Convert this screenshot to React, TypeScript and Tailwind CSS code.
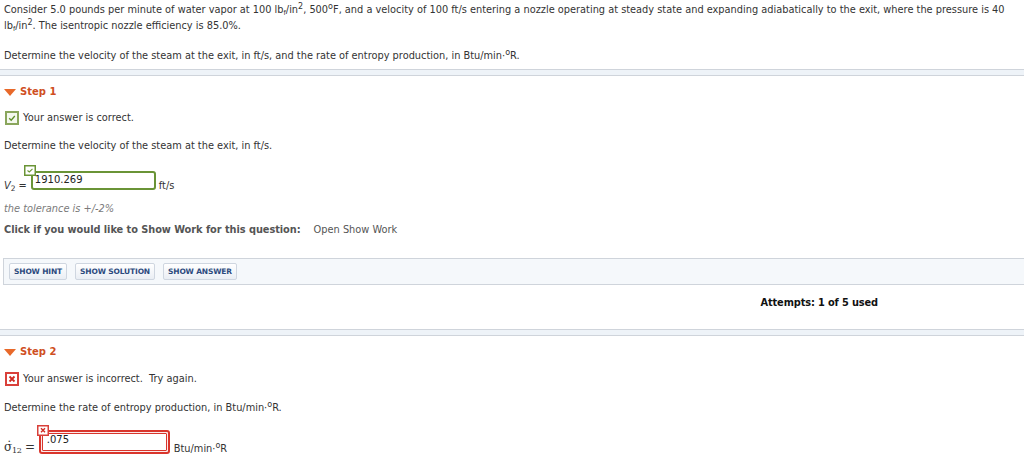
import React from "react";

const font = { fontFamily: '"DejaVu Sans", Verdana, sans-serif' };

function CheckBig() {
  return (
    <svg width="14" height="14" viewBox="0 0 14 14" className="shrink-0">
      <rect x="1" y="1" width="12" height="12" fill="#f4f8ee" stroke="#8aa65c" strokeWidth="2" />
      <path d="M4.2 7.2 L6.2 9.2 L9.8 5" fill="none" stroke="#5f8f2a" strokeWidth="1.3" />
    </svg>
  );
}

function XBig() {
  return (
    <svg width="14" height="14" viewBox="0 0 14 14" className="shrink-0">
      <rect x="1" y="1" width="12" height="12" fill="#fff" stroke="#d9403a" strokeWidth="2" />
      <path d="M4.5 4.5 L9.5 9.5 M9.5 4.5 L4.5 9.5" fill="none" stroke="#d12a22" strokeWidth="1.8" />
    </svg>
  );
}

function CheckSmall() {
  return (
    <svg width="12" height="11" viewBox="0 0 12 11">
      <rect x="0.75" y="0.75" width="10.5" height="9.5" fill="#fff" stroke="#6a9436" strokeWidth="1.5" />
      <path d="M3.5 5.5 L5.3 7 L8.5 3.8" fill="none" stroke="#6a9436" strokeWidth="1.1" />
    </svg>
  );
}

function XSmall() {
  return (
    <svg width="12" height="11" viewBox="0 0 12 11">
      <rect x="0.75" y="0.75" width="10.5" height="9.5" fill="#fff" stroke="#d9403a" strokeWidth="1.5" />
      <path d="M4 3.3 L8 7.3 M8 3.3 L4 7.3" fill="none" stroke="#d12a22" strokeWidth="1.4" />
    </svg>
  );
}

function StepHeader({ label }: { label: string }) {
  return (
    <div className="flex h-[16px] items-center pl-[4px]">
      <svg width="12" height="7" viewBox="0 0 12 7" className="mr-[4px]">
        <path d="M0 0 L12 0 L6 7 Z" fill="#e8692a" />
      </svg>
      <span className="text-[10px] font-bold text-[#cf4f1f]">{label}</span>
    </div>
  );
}

function Band({ className = "" }: { className?: string }) {
  return <div className={"w-full bg-[#eef3f8] border-[#cfd4db] " + className} />;
}

export default function App() {
  return (
    <div className="w-[1024px] h-[469px] overflow-hidden bg-white text-[9.8px] text-[#333] leading-[16px]" style={font}>
      {/* problem text */}
      <div className="pl-[4px] pt-[2px]">
        <div className="h-[16px] whitespace-nowrap">
          Consider 5.0 pounds per minute of water vapor at 100 lb<sub className="text-[6.5px]">f</sub>/in
          <sup className="text-[8px]">2</sup>, 500<sup className="text-[8px]">o</sup>F, and a velocity of 100 ft/s
          entering a nozzle operating at steady state and expanding adiabatically to the exit, where the pressure is 40
        </div>
        <div className="h-[16px] whitespace-nowrap">
          lb<sub className="text-[6.5px]">f</sub>/in<sup className="text-[8px]">2</sup>. The isentropic nozzle efficiency
          is 85.0%.
        </div>
        <div className="mt-[14px] h-[16px] whitespace-nowrap">
          Determine the velocity of the steam at the exit, in ft/s, and the rate of entropy production, in Btu/min·
          <sup className="text-[8px]">o</sup>R.
        </div>
      </div>

      <Band className="mt-[5px] h-[7px] border-t border-b" />

      {/* Step 1 */}
      <div className="mt-[8px]">
        <StepHeader label="Step 1" />
        <div className="mt-[10px] flex h-[16px] items-center pl-[5px]">
          <CheckBig />
          <span className="ml-[4px]">Your answer is correct.</span>
        </div>
        <div className="mt-[12px] h-[16px] pl-[4px]">Determine the velocity of the steam at the exit, in ft/s.</div>
        <div className="mt-[11px] flex items-end pl-[4px]">
          <span className="mb-[-4px] whitespace-nowrap">
            <i>V</i>
            <sub className="text-[7.5px]">2</sub> =
          </span>
          <div className="relative ml-[4px] pt-[6px]">
            <div className="absolute left-[-7px] top-0">
              <CheckSmall />
            </div>
            <div className="h-[19px] w-[125px] rounded-[3px] border-2 border-[#6a9436] bg-white pl-[2px] text-[10px] leading-[13px] text-[#222]">
              1910.269
            </div>
          </div>
          <span className="mb-[-4px] ml-[3px]">ft/s</span>
        </div>
        <div className="mt-[11px] h-[16px] pl-[4px] italic text-[#7a7a7a]">the tolerance is +/-2%</div>
        <div className="mt-[5px] flex h-[16px] pl-[4px] whitespace-nowrap">
          <span className="font-bold tracking-[-0.05px] text-[#555]">
            Click if you would like to Show Work for this question:
          </span>
          <span className="ml-[13px] text-[#555]">Open Show Work</span>
        </div>

        <div className="ml-[3px] mt-[20px] flex h-[27px] items-center gap-[8px] border border-r-0 border-[#cfd4db] bg-[#f5f8fb] pl-[5px]">
          {["SHOW HINT", "SHOW SOLUTION", "SHOW ANSWER"].map((t) => (
            <div
              key={t}
              className="flex h-[17px] items-center rounded-[2px] border border-[#cfd6e0] bg-gradient-to-b from-white to-[#eaeef4] px-[4px] text-[7.5px] font-bold leading-none tracking-[-0.15px] text-[#2c4a7e]"
            >
              {t}
            </div>
          ))}
        </div>

        <div className="mt-[10px] flex h-[16px] justify-end pr-[146px] font-bold tracking-[-0.12px] text-[#111]">
          Attempts: 1 of 5 used
        </div>
      </div>

      <Band className="mt-[18px] h-[7px] border-t border-b" />

      {/* Step 2 */}
      <div className="mt-[8px]">
        <StepHeader label="Step 2" />
        <div className="mt-[11px] flex h-[16px] items-center pl-[5px]">
          <XBig />
          <span className="ml-[4px]">Your answer is incorrect.&nbsp; Try again.</span>
        </div>
        <div className="mt-[13px] h-[16px] pl-[4px]">
          Determine the rate of entropy production, in Btu/min·<sup className="text-[8px]">o</sup>R.
        </div>
        <div className="mt-[9px] flex items-end pl-[4px]">
          <span
            className="mb-[-1px] whitespace-nowrap text-[12px] tracking-[-0.3px]"
            style={{ fontFamily: '"DejaVu Serif", serif' }}
          >
            σ̇<sub className="text-[8px]">12</sub> =
          </span>
          <div className="relative ml-[4px] pt-[5px]">
            <div className="absolute left-[-2px] top-0">
              <XSmall />
            </div>
            <div className="h-[24px] w-[131px] rounded-[3px] border-2 border-[#d9352c] bg-[#fbeaea] p-[1px]">
              <div className="h-full w-full rounded-[1px] border border-[#d9352c] bg-white pl-[4px] text-[10px] leading-[12px] text-[#222]">
                .075
              </div>
            </div>
          </div>
          <span className="mb-[-3px] ml-[4px] whitespace-nowrap">
            Btu/min·<sup className="text-[8px]">o</sup>R
          </span>
        </div>
      </div>
    </div>
  );
}
